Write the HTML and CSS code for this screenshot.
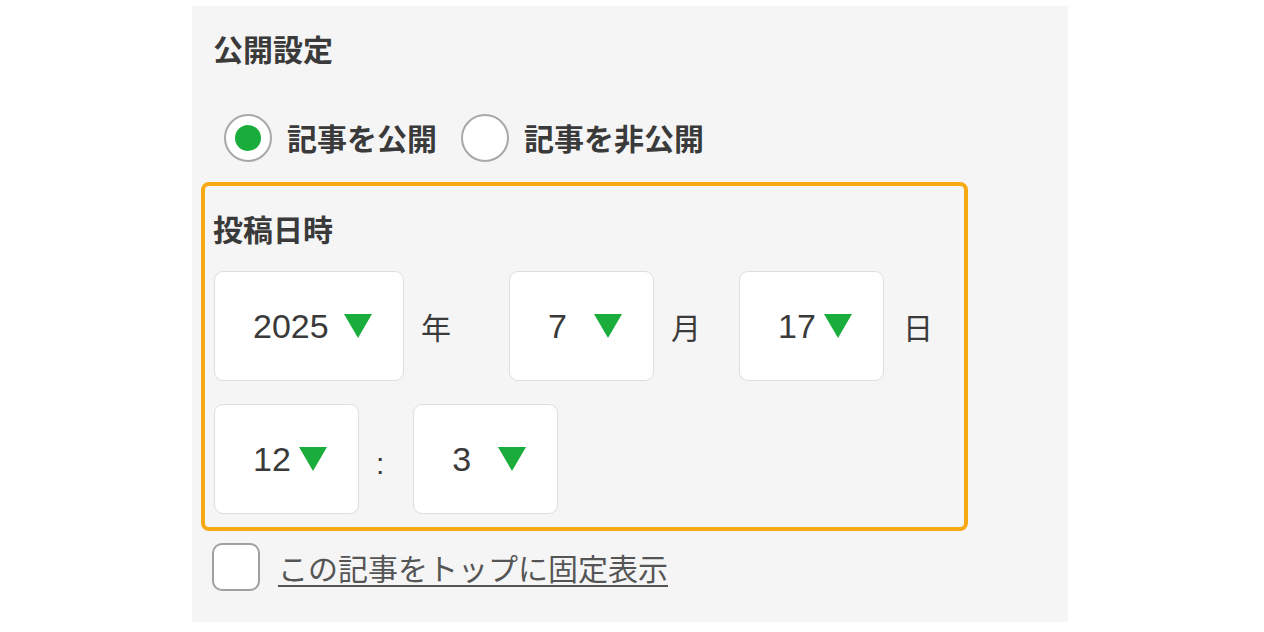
FILE: index.html
```html
<!DOCTYPE html>
<html lang="ja">
<head>
<meta charset="utf-8">
<title>公開設定</title>
<link rel="stylesheet" href="styles.css">
</head>
<body>
<div class="panel">
  <div class="title">公開設定</div>
  <div class="radios">
    <label class="radio">
      <span class="radio-circle checked"><span class="radio-dot"></span></span>
      <span class="radio-label">記事を公開</span>
    </label>
    <label class="radio radio-second">
      <span class="radio-circle"></span>
      <span class="radio-label">記事を非公開</span>
    </label>
  </div>
  <div class="datetime">
    <div class="title sub">投稿日時</div>
    <div class="row">
      <div class="select wide"><span class="num">2025</span><svg class="tri" viewBox="0 0 28 24"><polygon points="0,0 28,0 14,24" fill="#1aad3c"/></svg></div>
      <span class="unit u-year">年</span>
      <div class="select"><span class="num">7</span><svg class="tri" viewBox="0 0 28 24"><polygon points="0,0 28,0 14,24" fill="#1aad3c"/></svg></div>
      <span class="unit u-month">月</span>
      <div class="select"><span class="num">17</span><svg class="tri" viewBox="0 0 28 24"><polygon points="0,0 28,0 14,24" fill="#1aad3c"/></svg></div>
      <span class="unit u-day">日</span>
    </div>
    <div class="row">
      <div class="select"><span class="num">12</span><svg class="tri" viewBox="0 0 28 24"><polygon points="0,0 28,0 14,24" fill="#1aad3c"/></svg></div>
      <span class="colon">:</span>
      <div class="select"><span class="num">3</span><svg class="tri" viewBox="0 0 28 24"><polygon points="0,0 28,0 14,24" fill="#1aad3c"/></svg></div>
    </div>
  </div>
  <label class="pin">
    <span class="checkbox"></span>
    <span class="pin-label">この記事をトップに固定表示</span>
  </label>
</div>
</body>
</html>
```

FILE: styles.css
```css
html, body {
  margin: 0;
  padding: 0;
  background: #ffffff;
}

body {
  font-family: "Liberation Sans", "Noto Sans CJK JP", sans-serif;
  color: #3a3a3a;
}

.panel {
  margin: 6px 0 0 192px;
  width: 876px;
  height: 616px;
  box-sizing: border-box;
  background: #f5f5f5;
  padding: 22px 0 0 9px;
}

.title {
  margin-left: 12px;
  font-family: "Noto Sans CJK JP", sans-serif;
  font-weight: 700;
  font-size: 30px;
  line-height: 40px;
  color: #3a3a3a;
}

.title.sub {
  margin-left: 0;
}

.radios {
  display: flex;
  align-items: center;
  height: 48px;
  margin: 46px 0 0 23px;
}

.radio {
  display: flex;
  align-items: center;
}

.radio-second {
  margin-left: 24px;
}

.radio-circle {
  width: 48px;
  height: 48px;
  box-sizing: border-box;
  border: 2px solid #a8a8a8;
  border-radius: 50%;
  background: #ffffff;
  display: flex;
  align-items: center;
  justify-content: center;
}

.radio-dot {
  width: 26px;
  height: 26px;
  border-radius: 50%;
  background: #1aad3c;
}

.radio-label {
  margin-left: 15px;
  margin-top: -3px;
  font-family: "Noto Sans CJK JP", sans-serif;
  font-weight: 700;
  font-size: 30px;
  line-height: 40px;
  color: #3a3a3a;
}

.datetime {
  margin-top: 20px;
  width: 767px;
  height: 349px;
  box-sizing: border-box;
  border: 4px solid #f6a912;
  border-radius: 8px;
  padding: 22px 8px 0 8px;
}

.row {
  display: flex;
  align-items: center;
  margin-top: 23px;
  padding-left: 1px;
}

.select {
  width: 145px;
  height: 110px;
  box-sizing: border-box;
  background: #ffffff;
  border: 1px solid #dedede;
  border-radius: 9px;
  padding: 0 31px 0 38px;
  display: flex;
  align-items: center;
  justify-content: space-between;
}

.select.wide {
  width: 190px;
}

.num {
  font-family: "Liberation Sans", sans-serif;
  font-size: 34px;
  line-height: 40px;
  color: #3a3a3a;
}

.tri {
  width: 28px;
  height: 24px;
  flex: none;
}

.unit {
  font-family: "Noto Sans CJK JP", sans-serif;
  font-size: 30px;
  line-height: 40px;
  color: #3a3a3a;
  margin-left: 17px;
}

.u-year {
  margin-right: 58px;
}

.u-month {
  margin-right: 38px;
}

.u-day {
  margin-left: 19px;
}

.colon {
  font-family: "Liberation Sans", sans-serif;
  font-size: 30px;
  line-height: 40px;
  margin: 10px 29px 0 17px;
  color: #3a3a3a;
}

.pin {
  display: flex;
  align-items: center;
  margin: 12px 0 0 11px;
}

.checkbox {
  width: 48px;
  height: 48px;
  box-sizing: border-box;
  border: 2px solid #a0a0a0;
  border-radius: 10px;
  background: #ffffff;
}

.pin-label {
  margin-left: 18px;
  font-family: "Noto Sans CJK JP", sans-serif;
  font-size: 30px;
  line-height: 40px;
  color: #555555;
  text-decoration: underline;
  text-decoration-thickness: 2px;
  text-underline-offset: 5px;
}
```
